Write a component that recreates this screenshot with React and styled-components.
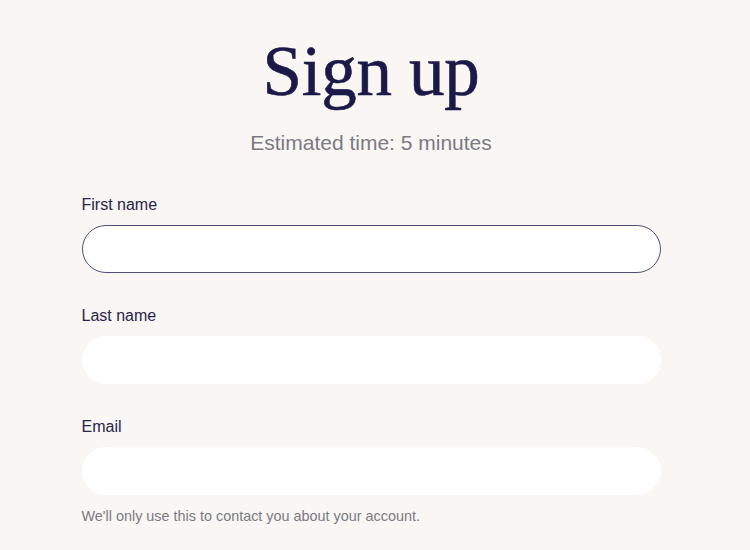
import React from "react";
import styled, { createGlobalStyle } from "styled-components";

const GlobalStyle = createGlobalStyle`
  body {
    margin: 0;
    background: #f9f6f3;
    font-family: "Liberation Sans", Arial, sans-serif;
  }
`;

const Page = styled.div`
  width: 750px;
  height: 550px;
  overflow: hidden;
  display: flex;
  flex-direction: column;
  align-items: center;
  padding-right: 8px;
  box-sizing: border-box;
`;

const Title = styled.h1`
  margin: 31px 0 0;
  font-family: "Liberation Serif", "Times New Roman", serif;
  font-weight: 400;
  font-size: 71px;
  line-height: 80px;
  color: #1b1948;
  letter-spacing: -0.3px;
  -webkit-text-stroke: 0.6px #1b1948;
`;

const Subtitle = styled.p`
  margin: 20px 0 0;
  font-size: 21px;
  line-height: 24px;
  color: #7b7a83;
`;

const Form = styled.form`
  width: 579px;
  margin-top: 40px;
  display: flex;
  flex-direction: column;
  gap: 33px;
`;

const Field = styled.div`
  display: flex;
  flex-direction: column;
  gap: 10px;
`;

const Label = styled.label`
  font-size: 16px;
  line-height: 20px;
  color: #27254a;
`;

const Input = styled.input`
  box-sizing: border-box;
  height: 48px;
  border-radius: 24px;
  background: #ffffff;
  border: 1.5px solid ${({ $active }) => ($active ? "#504e76" : "transparent")};
  outline: none;
  padding: 0 20px;
  font-size: 16px;
  font-family: inherit;
`;

const Hint = styled.p`
  margin: -20px 0 0;
  font-size: 14.4px;
  line-height: 16px;
  color: #7b7a83;
`;

export default function App() {
  return (
    <>
      <GlobalStyle />
      <Page>
        <Title>Sign up</Title>
        <Subtitle>Estimated time: 5 minutes</Subtitle>
        <Form>
          <Field>
            <Label htmlFor="first">First name</Label>
            <Input id="first" $active />
          </Field>
          <Field>
            <Label htmlFor="last">Last name</Label>
            <Input id="last" />
          </Field>
          <Field>
            <Label htmlFor="email">Email</Label>
            <Input id="email" type="email" />
          </Field>
          <Hint>We'll only use this to contact you about your account.</Hint>
        </Form>
      </Page>
    </>
  );
}
